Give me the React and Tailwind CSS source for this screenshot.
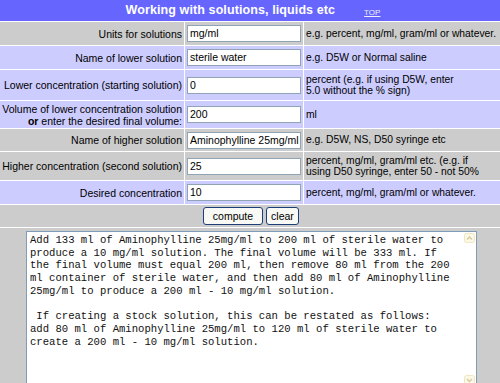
import React from 'react';

const rows = [
  { bg: 'bg-[#cccccc]', h: 'h-[23px]', label: 'Units for solutions', value: 'mg/ml', help: 'e.g. percent, mg/ml, gram/ml or whatever.' },
  { bg: 'bg-[#ccccff]', h: 'h-[23px]', label: 'Name of lower solution', value: 'sterile water', help: 'e.g. D5W or Normal saline' },
  { bg: 'bg-[#ccccff]', h: 'h-[30px]', label: 'Lower concentration (starting solution)', value: '0', help: ['percent (e.g. if using D5W, enter', '5.0 without the % sign)'] },
  {
    bg: 'bg-[#ccccff]',
    h: 'h-[27px]',
    label: (
      <>
        Volume of lower concentration solution
        <br />
        <b>or</b> enter the desired final volume:
      </>
    ),
    value: '200',
    help: 'ml',
  },
  { bg: 'bg-[#cccccc]', h: 'h-[22px]', label: 'Name of higher solution', value: 'Aminophylline 25mg/ml', help: 'e.g. D5W, NS, D50 syringe etc' },
  { bg: 'bg-[#cccccc]', h: 'h-[28px]', label: 'Higher concentration (second solution)', value: '25', help: ['percent, mg/ml, gram/ml etc. (e.g. if', 'using D50 syringe, enter 50 - not 50%'] },
  { bg: 'bg-[#ccccff]', h: 'h-[23px]', label: 'Desired concentration', value: '10', help: 'percent, mg/ml, gram/ml or whatever.' },
];

const result = `Add 133 ml of Aminophylline 25mg/ml to 200 ml of sterile water to
produce a 10 mg/ml solution. The final volume will be 333 ml. If
the final volume must equal 200 ml, then remove 80 ml from the 200
ml container of sterile water, and then add 80 ml of Aminophylline
25mg/ml to produce a 200 ml - 10 mg/ml solution.

 If creating a stock solution, this can be restated as follows:
add 80 ml of Aminophylline 25mg/ml to 120 ml of sterile water to
create a 200 ml - 10 mg/ml solution.`;

const ScrollArrow = ({ down }) => (
  <svg width="11" height="10" viewBox="0 0 11 10" className="block">
    <rect x="0.5" y="0.5" width="10" height="9" rx="2" fill="#fbf8e8" stroke="#efe6bd" />
    <path d={down ? 'M3 4l2.5 2.5L8 4' : 'M3 6.5l2.5-2.5L8 6.5'} fill="none" stroke="#d6cca2" strokeWidth="1.5" />
  </svg>
);

export default function App() {
  return (
    <div className="w-[500px] h-[383px] overflow-hidden bg-white font-['Liberation_Sans',Arial,sans-serif] text-[10.5px] text-black">
      <table className="border-separate border-spacing-[1px] -m-[1px] w-[502px]">
        <tbody>
          <tr>
            <td colSpan={3} className="bg-[#6666ff] h-[21px] p-0">
              <div className="flex items-center justify-center pl-[6px]">
                <span className="text-white font-bold text-[12.5px] tracking-[0.1px]">Working with solutions, liquids etc</span>
                <span className="ml-[29px] text-[8px] text-[#eef] underline mt-[4px]">TOP</span>
              </div>
            </td>
          </tr>
          {rows.map((r, i) => (
            <tr key={i}>
              <td className={`${r.bg} ${r.h} w-[184px] text-right px-[2px] py-0 leading-[12px]`}>{r.label}</td>
              <td className={`${r.bg} ${r.h} w-[118px] px-[2px] py-0`}>
                <div className="h-[17px] w-[114px] border border-[#8fa5b5] bg-white px-[2px] leading-[15px] text-[10.5px] whitespace-nowrap overflow-hidden">
                  {r.value}
                </div>
              </td>
              <td className={`${r.bg} ${r.h} px-[2px] py-0 leading-[11.5px] text-[10.3px]`}>
                {Array.isArray(r.help) ? (
                  <>
                    {r.help[0]}
                    <br />
                    {r.help[1]}
                  </>
                ) : (
                  r.help
                )}
              </td>
            </tr>
          ))}
          <tr>
            <td colSpan={3} className="bg-[#cccccc] h-[22px] p-0">
              <div className="flex justify-center gap-[3px] pl-[2px]">
                <button className="h-[18px] w-[60px] rounded-[3px] border border-[#1c3f7a] bg-[#f8f8f4] text-[10.5px] leading-[15px]">compute</button>
                <button className="h-[18px] w-[33px] rounded-[3px] border border-[#1c3f7a] bg-[#f8f8f4] text-[10.5px] leading-[15px]">clear</button>
              </div>
            </td>
          </tr>
          <tr>
            <td colSpan={3} className="bg-[#cccccc] pt-[3px] pb-[20px]">
              <div className="relative ml-[26px] w-[451px] h-[156px] border border-[#7f9db9] bg-white">
                <pre className="m-0 pl-[3px] pt-[2px] font-['Liberation_Mono','Courier_New',monospace] text-[10.6px] leading-[12.7px] text-[#111]">
                  {result}
                </pre>
                <div className="absolute right-[1px] top-[1px]">
                  <ScrollArrow />
                </div>
                <div className="absolute right-[1px] bottom-[1px]">
                  <ScrollArrow down />
                </div>
              </div>
            </td>
          </tr>
        </tbody>
      </table>
    </div>
  );
}
